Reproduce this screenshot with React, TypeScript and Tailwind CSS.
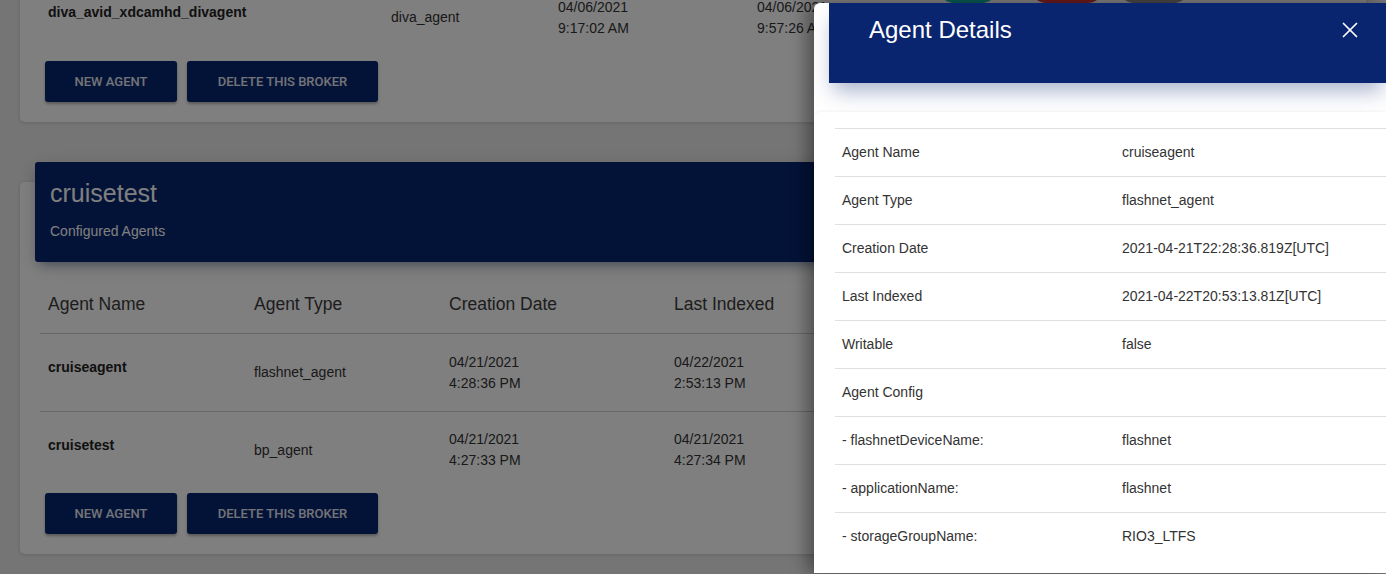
import { X } from 'lucide-react';

type AgentRow = {
  name: string;
  type: string;
  created: [string, string];
  indexed: [string, string];
};

const brokerA: AgentRow[] = [
  { name: 'diva_avid_xdcamhd_divagent', type: 'diva_agent', created: ['04/06/2021', '9:17:02 AM'], indexed: ['04/06/2021', '9:57:26 AM'] },
];

const brokerB: AgentRow[] = [
  { name: 'cruiseagent', type: 'flashnet_agent', created: ['04/21/2021', '4:28:36 PM'], indexed: ['04/22/2021', '2:53:13 PM'] },
  { name: 'cruisetest', type: 'bp_agent', created: ['04/21/2021', '4:27:33 PM'], indexed: ['04/21/2021', '4:27:34 PM'] },
];

const details: [string, string][] = [
  ['Agent Name', 'cruiseagent'],
  ['Agent Type', 'flashnet_agent'],
  ['Creation Date', '2021-04-21T22:28:36.819Z[UTC]'],
  ['Last Indexed', '2021-04-22T20:53:13.81Z[UTC]'],
  ['Writable', 'false'],
  ['Agent Config', ''],
  ['- flashnetDeviceName:', 'flashnet'],
  ['- applicationName:', 'flashnet'],
  ['- storageGroupName:', 'RIO3_LTFS'],
];

const colsA = 'grid grid-cols-[343px_167px_199px_1fr]';
const colsB = 'grid grid-cols-[206px_195px_225px_1fr]';

const AgentRowView = ({ row, first, cols }: { row: AgentRow; first: boolean; cols: string }) => (
  <div className={`${cols} h-[77px] items-center text-[14px] text-[#333] ${first ? '' : 'border-t border-[#cfcfcf]'}`}>
    <div className="px-2 pb-[10px] font-bold text-[#222]">{row.name}</div>
    <div className="px-2">{row.type}</div>
    <div className="px-2 leading-[21px]">
      <div>{row.created[0]}</div>
      <div>{row.created[1]}</div>
    </div>
    <div className="px-2 leading-[21px]">
      <div>{row.indexed[0]}</div>
      <div>{row.indexed[1]}</div>
    </div>
  </div>
);

const BrokerButtons = () => (
  <div className="mt-[5px] ml-[5px] flex gap-[10px]">
    <button className="h-[41px] w-[132px] rounded-[3px] bg-[#06246e] font-['Roboto',sans-serif] text-[13px] font-medium uppercase text-white/90 shadow-[0_2px_3px_rgba(0,0,0,0.3)]">
      New Agent
    </button>
    <button className="h-[41px] w-[191px] rounded-[3px] bg-[#06246e] font-['Roboto',sans-serif] text-[13px] font-medium uppercase text-white/90 shadow-[0_2px_3px_rgba(0,0,0,0.3)]">
      Delete this broker
    </button>
  </div>
);

export default function App() {
  return (
    <div className="relative h-[574px] w-[1386px] overflow-hidden bg-[#ebebeb] font-['Liberation_Sans',Arial,sans-serif]">
      {/* page behind the drawer */}
      <div className="flex flex-col px-[20px]">
        <div className="-mt-[21px] rounded-[5px] bg-white px-[20px] pb-[20px] shadow-[0_1px_4px_rgba(0,0,0,0.14)]">
          {brokerA.map((r, i) => (
            <AgentRowView key={r.name} row={r} first={i === 0} cols={colsA} />
          ))}
          <BrokerButtons />
        </div>

        <div className="mt-[60px] rounded-[5px] bg-white pb-[20px] shadow-[0_1px_4px_rgba(0,0,0,0.14)]">
          <div className="-mt-[20px] mx-[15px] h-[100px] rounded-[3px] bg-[#06246e] px-[15px] pt-[17px] text-white shadow-[0_4px_20px_rgba(0,0,0,0.14),0_7px_10px_-5px_rgba(6,36,110,0.4)]">
            <div className="text-[25px] leading-[29px]">cruisetest</div>
            <div className="mt-[15px] text-[14px] leading-[16px]">Configured Agents</div>
          </div>
          <div className="px-[20px]">
            <div className={`${colsB} pt-[32px] pb-[19px] text-[17.5px] leading-[20px] text-[#3a3a3a]`}>
              <div className="px-2">Agent Name</div>
              <div className="px-2">Agent Type</div>
              <div className="px-2">Creation Date</div>
              <div className="px-2">Last Indexed</div>
            </div>
            <div className="border-t border-[#cfcfcf]">
              {brokerB.map((r, i) => (
                <AgentRowView key={r.name} row={r} first={i === 0} cols={colsB} />
              ))}
            </div>
          </div>
          <div className="px-[20px]">
            <BrokerButtons />
          </div>
        </div>
      </div>

      {/* round action buttons scrolled just above the view */}
      <div className="absolute left-[938px] top-[-30px] flex">
        <div className="h-[33px] w-[60px] rounded-full bg-[#17b4a0]" />
        <div className="ml-[32px] h-[33px] w-[74px] rounded-full bg-[#d83636]" />
        <div className="ml-[14px] h-[33px] w-[72px] rounded-full bg-[#8e8e8e]" />
      </div>

      {/* backdrop */}
      <div className="absolute inset-0 bg-black/50" />

      {/* drawer */}
      <div className="absolute right-0 top-[3px] flex h-[570px] w-[572px] flex-col rounded-l-[6px] bg-white shadow-[-8px_0_16px_rgba(0,0,0,0.35)]">
        <div className="ml-[15px] h-[80px] bg-[#0a2570] shadow-[0_12px_20px_-4px_rgba(10,37,112,0.35)]">
          <div className="flex h-[54px] items-center justify-between pl-[40px] pr-[23px]">
            <span className="text-[24px] leading-[28px] text-white">Agent Details</span>
            <X size={26} strokeWidth={1.6} className="text-white" />
          </div>
          <div className="ml-[11px] mt-[4px] h-px bg-[#0a2368]" />
        </div>

        <div className="mt-[29px] flex-1 rounded-tl-[6px] bg-white pl-[21px] pt-[16px] shadow-[0_-1px_3px_rgba(0,0,0,0.05)]">
          {details.map(([k, v]) => (
            <div key={k} className="grid h-[48px] grid-cols-[280px_1fr] items-center border-t border-[#e0e0e0] text-[14px] text-[#333]">
              <div className="pl-[7px]">{k}</div>
              <div className="pl-[7px]">{v}</div>
            </div>
          ))}
        </div>
      </div>
    </div>
  );
}
